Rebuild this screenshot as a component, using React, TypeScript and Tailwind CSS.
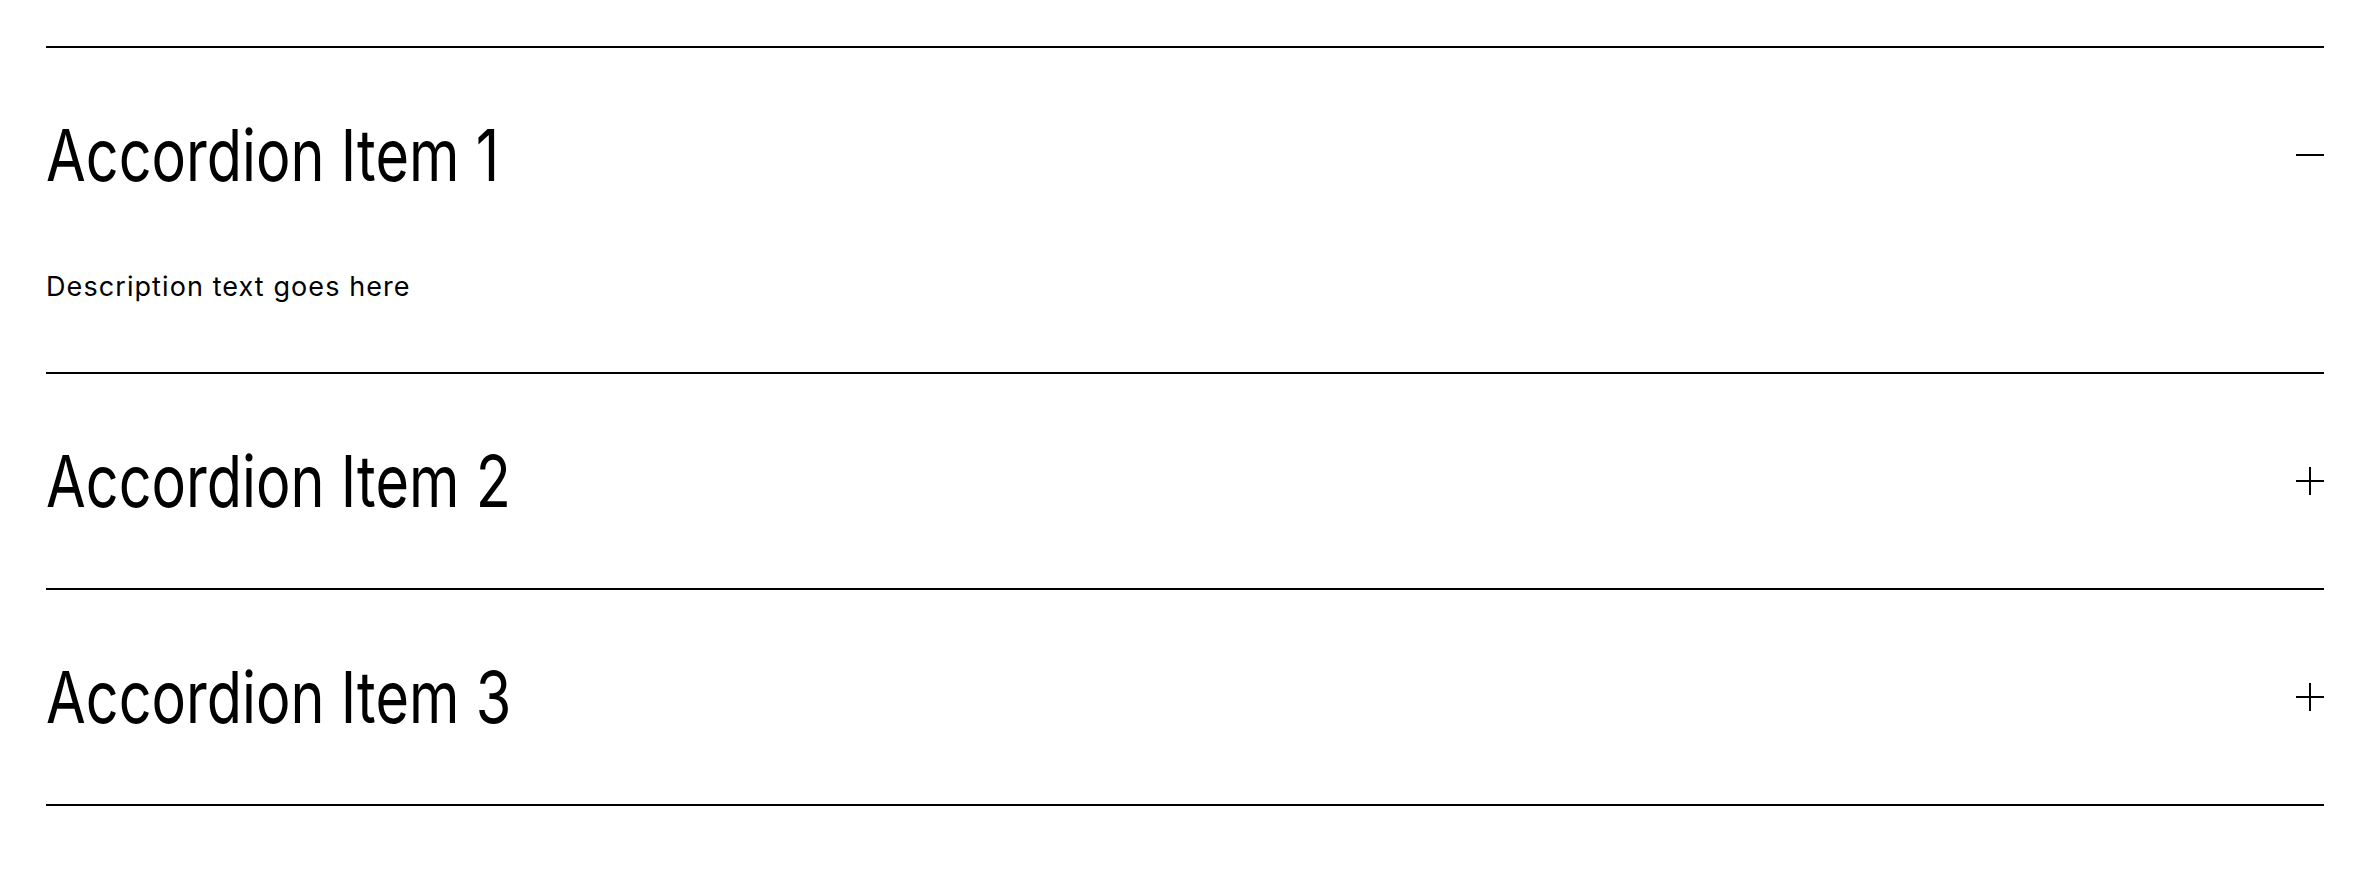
import { useState } from 'react'

type Item = {
    id: number
    title: string
    body: string
}

const items: Item[] = [
    { id: 1, title: 'Accordion Item 1', body: 'Description text goes here' },
    { id: 2, title: 'Accordion Item 2', body: 'Description text goes here' },
    { id: 3, title: 'Accordion Item 3', body: 'Description text goes here' },
]

// plus / minus toggle on the right of each header
function Toggle({ open }: { open: boolean }) {
    return (
        <svg width="28" height="28" viewBox="0 0 28 28" className="shrink-0">
            <line x1="0" y1="14" x2="28" y2="14" stroke="black" strokeWidth="2" />
            {!open && <line x1="14" y1="0" x2="14" y2="28" stroke="black" strokeWidth="2" />}
        </svg>
    )
}

export default function App() {
    const [openId, setOpenId] = useState<number | null>(1)

    return (
        <div className="min-h-[890px] bg-white pt-[46px] pl-[46px] pr-[56px]">
            <div className="border-t-2 border-black">
                {items.map(item => (
                    <div key={item.id} className="border-b-2 border-black">
                        <button
                            className="flex h-[214px] w-full items-center justify-between text-left"
                            onClick={() => setOpenId(openId === item.id ? null : item.id)}
                        >
                            <span className="origin-left scale-x-[0.8] font-['Inter',sans-serif] text-[72px] font-normal leading-none text-black">
                                {item.title}
                            </span>
                            <Toggle open={openId === item.id} />
                        </button>
                        {openId === item.id && (
                            <p className="pt-[7px] pb-[67px] font-['Inter',sans-serif] text-[27px] leading-[36px] tracking-[0.04em] text-black">
                                {item.body}
                            </p>
                        )}
                    </div>
                ))}
            </div>
        </div>
    )
}
